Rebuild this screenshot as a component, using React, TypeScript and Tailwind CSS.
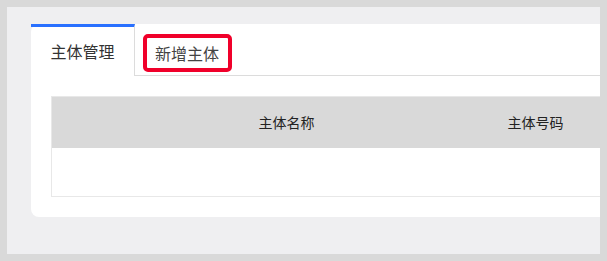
import React from "react";

export default function App() {
  const font = { fontFamily: '"Microsoft YaHei", "Noto Sans CJK SC", "Noto Sans", sans-serif' };
  return (
    <div className="w-[607px] h-[261px] bg-[#d9d9d9] p-[7px] overflow-hidden" style={font}>
      <div className="w-[593px] h-[247px] bg-[#efeff1] pl-[24px] pt-[17px] overflow-hidden">
        <div className="w-[720px] h-[193px] bg-white rounded-lg flex flex-col">
          <div className="flex h-[52px] shrink-0">
            <div className="w-[104px] h-[52px] border-t-[3px] border-[#2970ff] border-r border-r-[#dcdcdc] flex items-center justify-center text-[16px] text-[#333] pb-[1px]">
              主体管理
            </div>
            <div className="flex-1 border-b border-[#dcdcdc] pl-[8px] pt-[10px]">
              <div className="w-[89px] h-[38px] border-[4px] border-[#f0002a] rounded-[5px] flex items-center pl-[8px] text-[16px] text-[#444]">
                新增主体
              </div>
            </div>
          </div>
          <div className="pl-[20px] pt-[20px]">
            <div className="border-l border-b border-t border-[#e8e8e8]">
              <div className="flex h-[51px] bg-[#d9d9d9] items-center text-[14px] text-[#222]">
                <div className="w-[110px]" />
                <div className="w-[249px] text-center">主体名称</div>
                <div className="w-[249px] text-center">主体号码</div>
              </div>
              <div className="h-[48px] bg-white" />
            </div>
          </div>
        </div>
      </div>
    </div>
  );
}
